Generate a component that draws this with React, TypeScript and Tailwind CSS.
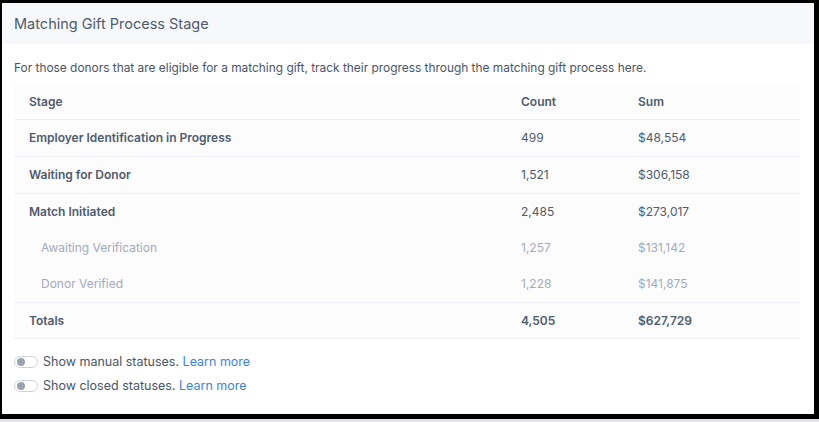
const rows = [
  { stage: 'Employer Identification in Progress', count: '499', sum: '$48,554', kind: 'main' },
  { stage: 'Waiting for Donor', count: '1,521', sum: '$306,158', kind: 'main' },
  { stage: 'Match Initiated', count: '2,485', sum: '$273,017', kind: 'parent' },
  { stage: 'Awaiting Verification', count: '1,257', sum: '$131,142', kind: 'sub' },
  { stage: 'Donor Verified', count: '1,228', sum: '$141,875', kind: 'sub' },
];

function Toggle() {
  return (
    <span className="w-6 h-3 rounded-full border border-[#cfd5df] bg-white flex items-center px-[2px]">
      <span className="w-[8px] h-[8px] rounded-full bg-[#9aa3b2]" />
    </span>
  );
}

export default function App() {
  return (
    <div className="w-[819px] h-[422px] bg-[#dfe2e8] font-['Inter',sans-serif]">
      <div className="h-[419px] border-black border-l-[2px] border-t-[3px] border-r-[5px] border-b-[5px] bg-white flex flex-col">
        <div className="h-[41px] bg-[#f7f8fc] flex items-center px-3 text-[14.5px] text-[#4f5b6e]">
          Matching Gift Process Stage
        </div>
        <div className="px-3 pt-4">
          <p className="text-[11.9px] text-[#4a5466] leading-4">
            For those donors that are eligible for a matching gift, track their progress through the matching gift process here.
          </p>
          <div className="mt-2 mr-[2px] bg-[#fcfcfd] text-[12px]">
            <div className="grid grid-cols-[492px_117px_1fr] h-[36px] items-center px-[15px] font-semibold text-[#4f5b6e] border-b border-[#eef0f5]">
              <span>Stage</span>
              <span>Count</span>
              <span>Sum</span>
            </div>
            {rows.map((r) => (
              <div
                key={r.stage}
                className={
                  r.kind === 'main'
                    ? 'grid grid-cols-[492px_117px_1fr] h-[37px] items-center px-[15px] border-b border-[#eef0f5] text-[#4f5b6e]'
                    : r.kind === 'parent'
                    ? 'grid grid-cols-[492px_117px_1fr] h-[36px] items-center px-[15px] text-[#4f5b6e]'
                    : 'grid grid-cols-[492px_117px_1fr] h-[36px] items-center px-[15px] text-[#a3abba]'
                }
              >
                <span className={r.kind === 'sub' ? 'pl-3' : 'font-semibold'}>{r.stage}</span>
                <span>{r.count}</span>
                <span>{r.sum}</span>
              </div>
            ))}
            <div className="grid grid-cols-[492px_117px_1fr] h-[37px] items-center px-[15px] border-y border-[#eef0f5] font-semibold text-[#4f5b6e]">
              <span>Totals</span>
              <span>4,505</span>
              <span>$627,729</span>
            </div>
          </div>
          <div className="mt-[15px] flex flex-col gap-[8px] text-[12.5px] text-[#4a5466]">
            <div className="h-[16px] flex items-center gap-[5px]">
              <Toggle />
              <span>
                Show manual statuses. <span className="text-[#3b82e6]">Learn more</span>
              </span>
            </div>
            <div className="h-[16px] flex items-center gap-[5px]">
              <Toggle />
              <span>
                Show closed statuses. <span className="text-[#3b82e6]">Learn more</span>
              </span>
            </div>
          </div>
        </div>
      </div>
    </div>
  );
}
